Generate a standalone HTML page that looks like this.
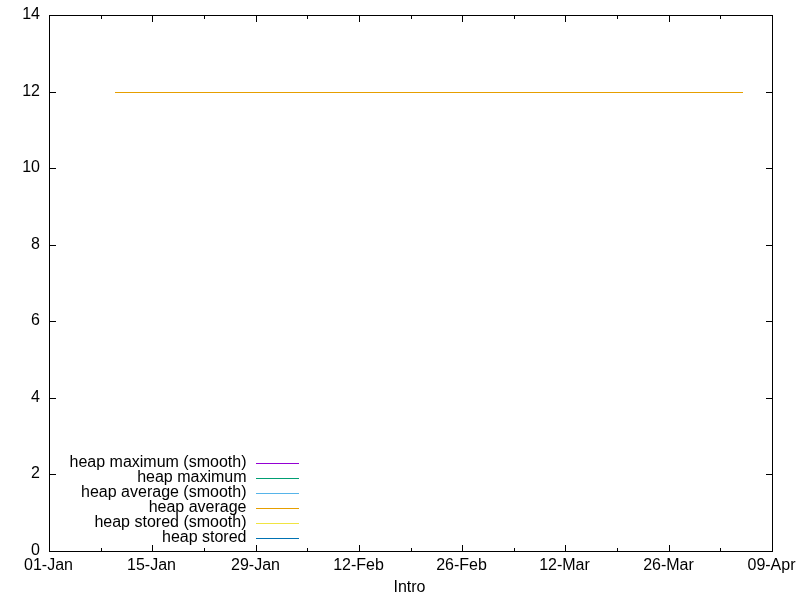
<!DOCTYPE html>
<html><head><meta charset="utf-8"><style>
html,body{margin:0;padding:0;background:#fff;width:800px;height:600px;overflow:hidden}
svg{display:block}
#w{position:absolute;left:0;top:0;width:800px;height:600px;will-change:transform}
text{font-family:"Liberation Sans",sans-serif;font-size:16px;fill:#000}
</style></head><body>
<div id="w"><svg width="800" height="600" viewBox="0 0 800 600" shape-rendering="crispEdges">
<rect x="0" y="0" width="800" height="600" fill="#fff"/>
<rect x="49" y="15" width="724" height="1" fill="#000"/>
<rect x="49" y="551" width="724" height="1" fill="#000"/>
<rect x="49" y="15" width="1" height="537" fill="#000"/>
<rect x="772" y="15" width="1" height="537" fill="#000"/>
<rect x="49" y="551" width="7" height="1" fill="#000"/>
<rect x="766" y="551" width="7" height="1" fill="#000"/>
<rect x="49" y="474" width="7" height="1" fill="#000"/>
<rect x="766" y="474" width="7" height="1" fill="#000"/>
<rect x="49" y="398" width="7" height="1" fill="#000"/>
<rect x="766" y="398" width="7" height="1" fill="#000"/>
<rect x="49" y="321" width="7" height="1" fill="#000"/>
<rect x="766" y="321" width="7" height="1" fill="#000"/>
<rect x="49" y="245" width="7" height="1" fill="#000"/>
<rect x="766" y="245" width="7" height="1" fill="#000"/>
<rect x="49" y="168" width="7" height="1" fill="#000"/>
<rect x="766" y="168" width="7" height="1" fill="#000"/>
<rect x="49" y="92" width="7" height="1" fill="#000"/>
<rect x="766" y="92" width="7" height="1" fill="#000"/>
<rect x="49" y="15" width="7" height="1" fill="#000"/>
<rect x="766" y="15" width="7" height="1" fill="#000"/>
<rect x="49" y="545" width="1" height="7" fill="#000"/>
<rect x="49" y="15" width="1" height="7" fill="#000"/>
<rect x="101" y="548" width="1" height="4" fill="#000"/>
<rect x="101" y="15" width="1" height="4" fill="#000"/>
<rect x="152" y="545" width="1" height="7" fill="#000"/>
<rect x="152" y="15" width="1" height="7" fill="#000"/>
<rect x="204" y="548" width="1" height="4" fill="#000"/>
<rect x="204" y="15" width="1" height="4" fill="#000"/>
<rect x="256" y="545" width="1" height="7" fill="#000"/>
<rect x="256" y="15" width="1" height="7" fill="#000"/>
<rect x="307" y="548" width="1" height="4" fill="#000"/>
<rect x="307" y="15" width="1" height="4" fill="#000"/>
<rect x="359" y="545" width="1" height="7" fill="#000"/>
<rect x="359" y="15" width="1" height="7" fill="#000"/>
<rect x="411" y="548" width="1" height="4" fill="#000"/>
<rect x="411" y="15" width="1" height="4" fill="#000"/>
<rect x="462" y="545" width="1" height="7" fill="#000"/>
<rect x="462" y="15" width="1" height="7" fill="#000"/>
<rect x="514" y="548" width="1" height="4" fill="#000"/>
<rect x="514" y="15" width="1" height="4" fill="#000"/>
<rect x="565" y="545" width="1" height="7" fill="#000"/>
<rect x="565" y="15" width="1" height="7" fill="#000"/>
<rect x="617" y="548" width="1" height="4" fill="#000"/>
<rect x="617" y="15" width="1" height="4" fill="#000"/>
<rect x="669" y="545" width="1" height="7" fill="#000"/>
<rect x="669" y="15" width="1" height="7" fill="#000"/>
<rect x="720" y="548" width="1" height="4" fill="#000"/>
<rect x="720" y="15" width="1" height="4" fill="#000"/>
<rect x="772" y="545" width="1" height="7" fill="#000"/>
<rect x="772" y="15" width="1" height="7" fill="#000"/>
<rect x="115" y="92" width="628" height="1" fill="#e69f00"/>
<rect x="256" y="463" width="43" height="1" fill="#9400d3"/>
<text x="246.5" y="467" text-anchor="end">heap maximum (smooth)</text>
<rect x="256" y="478" width="43" height="1" fill="#009e73"/>
<text x="246.5" y="482" text-anchor="end">heap maximum</text>
<rect x="256" y="493" width="43" height="1" fill="#56b4e9"/>
<text x="246.5" y="497" text-anchor="end">heap average (smooth)</text>
<rect x="256" y="508" width="43" height="1" fill="#e69f00"/>
<text x="246.5" y="512" text-anchor="end">heap average</text>
<rect x="256" y="523" width="43" height="1" fill="#f0e442"/>
<text x="246.5" y="527" text-anchor="end">heap stored (smooth)</text>
<rect x="256" y="538" width="43" height="1" fill="#0072b2"/>
<text x="246.5" y="542" text-anchor="end">heap stored</text>
<text x="40" y="555" text-anchor="end">0</text>
<text x="40" y="478" text-anchor="end">2</text>
<text x="40" y="402" text-anchor="end">4</text>
<text x="40" y="325" text-anchor="end">6</text>
<text x="40" y="249" text-anchor="end">8</text>
<text x="40" y="172" text-anchor="end">10</text>
<text x="40" y="96" text-anchor="end">12</text>
<text x="40" y="19" text-anchor="end">14</text>
<text x="48.5" y="570" text-anchor="middle">01-Jan</text>
<text x="151.5" y="570" text-anchor="middle">15-Jan</text>
<text x="255.5" y="570" text-anchor="middle">29-Jan</text>
<text x="358.5" y="570" text-anchor="middle">12-Feb</text>
<text x="461.5" y="570" text-anchor="middle">26-Feb</text>
<text x="564.5" y="570" text-anchor="middle">12-Mar</text>
<text x="668.5" y="570" text-anchor="middle">26-Mar</text>
<text x="771.5" y="570" text-anchor="middle">09-Apr</text>
<text x="409.5" y="592" text-anchor="middle">Intro</text>
</svg></div></body></html>
